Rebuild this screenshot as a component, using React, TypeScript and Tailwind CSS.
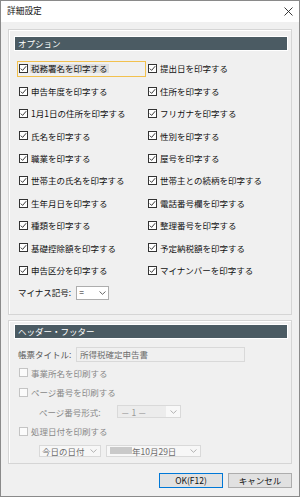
import React from 'react';

const leftItems = [
    '税務署名を印字する',
    '申告年度を印字する',
    '1月1日の住所を印字する',
    '氏名を印字する',
    '職業を印字する',
    '世帯主の氏名を印字する',
    '生年月日を印字する',
    '種類を印字する',
    '基礎控除額を印字する',
    '申告区分を印字する',
];

const rightItems = [
    '提出日を印字する',
    '住所を印字する',
    'フリガナを印字する',
    '性別を印字する',
    '屋号を印字する',
    '世帯主との続柄を印字する',
    '電話番号欄を印字する',
    '整理番号を印字する',
    '予定納税額を印字する',
    'マイナンバーを印字する',
];

const Check = ({ checked, disabled }: { checked?: boolean; disabled?: boolean }) => (
    <span
        className={`w-[9px] h-[9px] shrink-0 border flex items-center justify-center ${disabled ? 'border-[#c4c4c4] bg-[#fbfbfb]' : 'border-[#333] bg-white'}`}
    >
        {checked && (
            <svg width="7" height="7" viewBox="0 0 7 7">
                <path d="M0.8 3.6 L2.6 5.4 L6.2 1.2" fill="none" stroke="#222" strokeWidth="0.9" />
            </svg>
        )}
    </span>
);

const Chevron = ({ color = '#555' }: { color?: string }) => (
    <svg width="7" height="4" viewBox="0 0 7 4">
        <path d="M0.5 0.5 L3.5 3.3 L6.5 0.5" fill="none" stroke={color} strokeWidth="0.9" />
    </svg>
);

const Header = ({ title }: { title: string }) => (
    <div className="h-[13px] bg-[#4b5b63] outline outline-1 outline-white flex items-center pl-[3px] text-white text-[8.5px] leading-none">
        {title}
    </div>
);

const Item = ({ label, focused }: { label: string; focused?: boolean }) => (
    <div className="h-[22.4px] flex items-center">
        {focused ? (
            <div className="flex items-center w-[129px] h-[16px] border border-[#f2c14e] pl-[1px] gap-[2px]">
                <Check checked />
                <span className="bg-[#dedede] px-[1px]">{label}</span>
            </div>
        ) : (
            <div className="flex items-center pl-[2px] gap-[3px]">
                <Check checked />
                <span>{label}</span>
            </div>
        )}
    </div>
);

export default function App() {
    return (
        <div className="w-[300px] h-[497px] flex flex-col bg-[#f0f0f0] border border-[#8a8a8a] text-[8.5px] leading-none text-[#111] font-['Noto_Sans_CJK_JP','Liberation_Sans',sans-serif] overflow-hidden">
            {/* title bar */}
            <div className="h-[21px] bg-white flex items-center justify-between pl-[6px] pr-[6px] shrink-0">
                <span className="text-[8.7px]">詳細設定</span>
                <svg width="9" height="9" viewBox="0 0 9 9">
                    <path d="M0.5 0.5 L8.5 8.5 M8.5 0.5 L0.5 8.5" stroke="#222" strokeWidth="0.9" />
                </svg>
            </div>

            <div className="px-[7px] flex flex-col">
                {/* options */}
                <div className="mt-[7px] h-[286px] border border-[#d5d5d5] shadow-[inset_1px_1px_0_#fff] pl-[6px] pr-[4px] pt-[7px]">
                    <Header title="オプション" />
                    <div className="mt-[7.5px] grid grid-cols-[129px_1fr] pl-[2px]">
                        <div className="flex flex-col">
                            {leftItems.map((t, i) => (
                                <Item key={t} label={t} focused={i === 0} />
                            ))}
                        </div>
                        <div className="flex flex-col">
                            {rightItems.map((t) => (
                                <Item key={t} label={t} />
                            ))}
                        </div>
                    </div>
                    <div className="h-[22.4px] flex items-center pl-[3px] gap-[5px]">
                        <span>マイナス記号:</span>
                        <div className="w-[33px] h-[14px] bg-white border border-[#adadad] flex items-center justify-between px-[2px]">
                            <span>=</span>
                            <Chevron />
                        </div>
                    </div>
                </div>

                {/* header / footer */}
                <div className="mt-[5px] h-[144px] border border-[#d5d5d5] shadow-[inset_1px_1px_0_#fff] pl-[6px] pr-[4px] pt-[4px]">
                    <Header title="ヘッダー・フッター" />
                    <div className="mt-[7px] h-[18px] flex items-center pl-[3px] text-[#555]">
                        <span className="w-[58px]">帳票タイトル:</span>
                        <div className="w-[169px] h-[15px] border border-[#d9d9d9] bg-[#f0f0f0] flex items-center pl-[3px] text-[#6d6d6d]">
                            所得税確定申告書
                        </div>
                    </div>
                    <div className="h-[19.5px] flex items-center pl-[4px] gap-[3px] text-[#888]">
                        <Check disabled />
                        <span>事業所名を印刷する</span>
                    </div>
                    <div className="h-[19.5px] flex items-center pl-[4px] gap-[3px] text-[#888]">
                        <Check disabled />
                        <span>ページ番号を印刷する</span>
                    </div>
                    <div className="h-[19.5px] flex items-center pl-[24px] text-[#888]">
                        <span className="w-[78px]">ページ番号形式:</span>
                        <div className="w-[64px] h-[13px] border border-[#d9d9d9] bg-[#ececec] flex items-center">
                            <span className="flex-1 pl-[3px] text-[#999]">－ 1 －</span>
                            <span className="w-[14px] h-full bg-[#f8f8f8] flex items-center justify-center">
                                <Chevron color="#aaa" />
                            </span>
                        </div>
                    </div>
                    <div className="h-[19.5px] flex items-center pl-[4px] gap-[3px] text-[#888]">
                        <Check disabled />
                        <span>処理日付を印刷する</span>
                    </div>
                    <div className="h-[19.5px] flex items-center pl-[24px] gap-[5px]">
                        <div className="w-[62px] h-[12px] border border-[#d9d9d9] bg-[#f7f7f7] flex items-center">
                            <span className="flex-1 pl-[2px] text-[#6d6d6d]">今日の日付</span>
                            <span className="w-[13px] flex items-center justify-center">
                                <Chevron color="#aaa" />
                            </span>
                        </div>
                        <div className="w-[95px] h-[12px] border border-[#d9d9d9] bg-[#f7f7f7] flex items-center">
                            <span className="ml-[3px] w-[22px] h-[7px] bg-[#c9c9c9] blur-[0.6px]" />
                            <span className="flex-1 text-[#6d6d6d]">年10月29日</span>
                            <span className="w-[13px] flex items-center justify-center">
                                <Chevron color="#aaa" />
                            </span>
                        </div>
                    </div>
                </div>

                {/* buttons */}
                <div className="mt-[9px] flex justify-end gap-[5px] pr-[0px]">
                    <button className="w-[64px] h-[15px] border border-[#0078d7] bg-[#e1e1e1] text-[8.5px] leading-none">
                        OK(F12)
                    </button>
                    <button className="w-[64px] h-[15px] border border-[#adadad] bg-[#e1e1e1] text-[8.5px] leading-none">
                        キャンセル
                    </button>
                </div>
            </div>
        </div>
    );
}
